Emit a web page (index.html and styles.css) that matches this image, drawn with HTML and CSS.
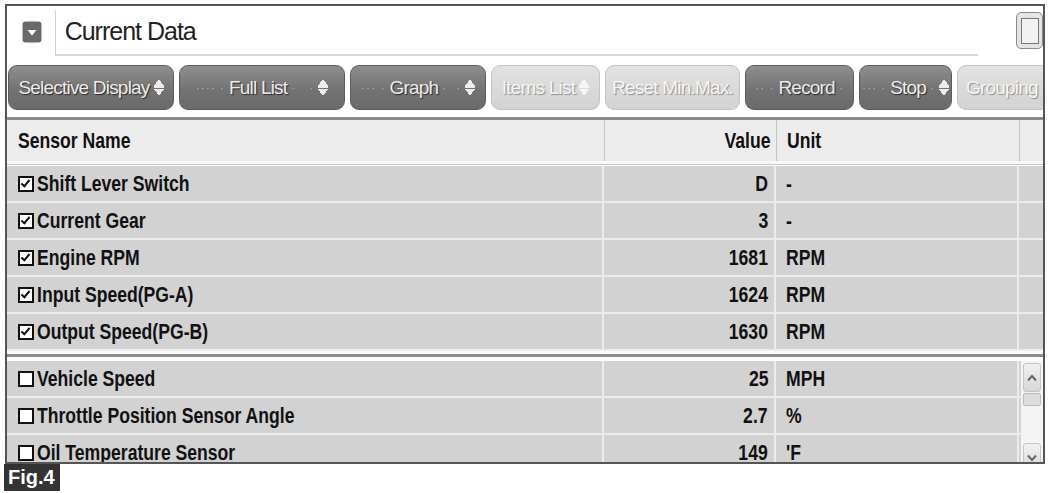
FILE: index.html
```html
<!DOCTYPE html>
<html lang="en">
<head>
<meta charset="UTF-8">
<title>Current Data</title>
<link rel="stylesheet" href="styles.css">
</head>
<body>
<div class="window">
    <div class="titlebar">
        <div class="menu-icon">
            <svg width="20" height="22" viewBox="0 0 20 22"><rect x="0.5" y="0.5" width="19" height="21" rx="3" fill="#6a6a6a"/><path d="M5.5 9 L14.5 9 L10 14.5 Z" fill="#fff"/></svg>
        </div>
        <div class="title">Current Data</div>
        <div class="win-btn"><span></span></div>
    </div>

    <div class="toolbar">
        <div class="tbtn w1">Selective Display <i class="spin"></i></div>
        <div class="tbtn w1"><span class="dots">···· ·</span> Full List <span class="dots">·&nbsp;&nbsp;&nbsp;·</span> <i class="spin"></i></div>
        <div class="tbtn w2"><span class="dots">··· ·</span> Graph <span class="dots">·&nbsp;&nbsp;·</span> <i class="spin"></i></div>
        <div class="tbtn w3 off">Items List <i class="spin"></i></div>
        <div class="tbtn w4 off">Reset Min.Max.</div>
        <div class="tbtn w3"><span class="dots">·· ·</span> Record <span class="dots">·</span></div>
        <div class="tbtn w5"><span class="dots">··· ·</span> Stop <span class="dots">·</span> <i class="spin"></i></div>
        <div class="tbtn w6 off">Grouping</div>
    </div>

    <div class="grid">
        <div class="row head">
            <div class="c-name"><span class="t">Sensor Name</span></div>
            <div class="c-val"><span class="t">Value</span></div>
            <div class="c-unit"><span class="t">Unit</span></div>
            <div class="c-end"></div>
        </div>

        <div class="fixed">
            <div class="row"><div class="c-name"><i class="cb on"></i><span class="t">Shift Lever Switch</span></div><div class="c-val"><span class="t">D</span></div><div class="c-unit"><span class="t">-</span></div><div class="c-end"></div></div>
            <div class="row"><div class="c-name"><i class="cb on"></i><span class="t">Current Gear</span></div><div class="c-val"><span class="t">3</span></div><div class="c-unit"><span class="t">-</span></div><div class="c-end"></div></div>
            <div class="row"><div class="c-name"><i class="cb on"></i><span class="t">Engine RPM</span></div><div class="c-val"><span class="t">1681</span></div><div class="c-unit"><span class="t">RPM</span></div><div class="c-end"></div></div>
            <div class="row"><div class="c-name"><i class="cb on"></i><span class="t">Input Speed(PG-A)</span></div><div class="c-val"><span class="t">1624</span></div><div class="c-unit"><span class="t">RPM</span></div><div class="c-end"></div></div>
            <div class="row"><div class="c-name"><i class="cb on"></i><span class="t">Output Speed(PG-B)</span></div><div class="c-val"><span class="t">1630</span></div><div class="c-unit"><span class="t">RPM</span></div><div class="c-end"></div></div>
        </div>

        <div class="scrolled">
            <div class="rows">
                <div class="row"><div class="c-name"><i class="cb"></i><span class="t">Vehicle Speed</span></div><div class="c-val"><span class="t">25</span></div><div class="c-unit"><span class="t">MPH</span></div></div>
                <div class="row"><div class="c-name"><i class="cb"></i><span class="t">Throttle Position Sensor Angle</span></div><div class="c-val"><span class="t">2.7</span></div><div class="c-unit"><span class="t">%</span></div></div>
                <div class="row"><div class="c-name"><i class="cb"></i><span class="t">Oil Temperature Sensor</span></div><div class="c-val"><span class="t">149</span></div><div class="c-unit"><span class="t">'F</span></div></div>
            </div>
            <div class="vscroll">
                <div class="sb-btn"><svg width="12" height="8" viewBox="0 0 12 8"><path d="M2 6.5 L6 2 L10 6.5" fill="none" stroke="#666" stroke-width="2"/></svg></div>
                <div class="sb-thumb"></div>
                <div class="sb-track"></div>
                <div class="sb-btn"><svg width="12" height="8" viewBox="0 0 12 8"><path d="M2 1.5 L6 6 L10 1.5" fill="none" stroke="#666" stroke-width="2"/></svg></div>
            </div>
        </div>
    </div>
</div>
<div class="fig">Fig.4</div>
</body>
</html>
```

FILE: styles.css
```css
body {
    margin: 0;
    background: #fff;
    font-family: "Liberation Sans", Arial, sans-serif;
    color: #111;
}
.window {
    margin: 4px 0 0 5px;
    width: 1036px;
    height: 456px;
    border: 2px solid #555;
    overflow: hidden;
    background: #fff;
}

/* title */
.titlebar {
    display: flex;
    height: 50px;
}
.menu-icon {
    width: 46px;
    display: flex;
    align-items: center;
    justify-content: center;
    border-right: 1px solid #ccc;
    margin-top: 4px;
    padding: 0 0 2px 2px;
}
.title {
    width: 921px;
    padding-left: 9px;
    font-size: 25px;
    letter-spacing: -1px;
    line-height: 50px;
    border-bottom: 2px solid #d8d8d8;
    color: #222;
}
.win-btn {
    margin: 6px 0 0 38px;
    width: 25px;
    height: 35px;
    border: 1px solid #888;
    border-radius: 5px;
    background: #e4e4e4;
    display: flex;
    align-items: center;
    justify-content: center;
}
.win-btn span {
    width: 16px;
    height: 24px;
    border: 1px solid #777;
    background: #f2f2f2;
}

/* toolbar */
.toolbar {
    display: flex;
    gap: 5px;
    padding: 9px 0 0 1px;
    box-sizing: border-box;
    height: 61px;
}
.tbtn {
    flex: none;
    height: 45px;
    box-sizing: border-box;
    border: 1px solid #5c5c5c;
    border-radius: 9px;
    background: linear-gradient(#8e8e8e, #737373 55%, #6a6a6a);
    color: #ececec;
    text-shadow: 1px 1px 1px #2a2a2a;
    font-size: 19px;
    letter-spacing: -0.8px;
    display: flex;
    align-items: center;
    justify-content: center;
    gap: 4px;
    white-space: nowrap;
    overflow: hidden;
}
.tbtn.off {
    background: linear-gradient(#e2e2e2, #d2d2d2);
    border-color: #c4c4c4;
    color: #f6f6f6;
    text-shadow: 1px 1px 1px #8a8a8a;
}
.w1 { width: 166px; }
.w2 { width: 136px; }
.w3 { width: 109px; }
.w4 { width: 135px; }
.w5 { width: 93px; }
.w6 { width: 100px; justify-content: flex-start; padding-left: 8px; }
.dots {
    color: #b0b0b0;
    font-size: 12px;
    letter-spacing: 1px;
    text-shadow: none;
}
.spin {
    width: 10px;
    height: 17px;
    flex: none;
    display: inline-block;
    background:
        linear-gradient(to bottom right, transparent 50%, currentColor 50%) 0 0 / 5px 7px no-repeat,
        linear-gradient(to bottom left, transparent 50%, currentColor 50%) 5px 0 / 5px 7px no-repeat,
        linear-gradient(currentColor, currentColor) 0 7px / 10px 2px no-repeat,
        linear-gradient(to top right, transparent 50%, currentColor 50%) 0 10px / 5px 7px no-repeat,
        linear-gradient(to top left, transparent 50%, currentColor 50%) 5px 10px / 5px 7px no-repeat;
}

/* grid */
.grid {
    border-top: 3px solid #8a8a8a;
    font-size: 22px;
    font-weight: bold;
}
.t {
    display: inline-block;
    white-space: nowrap;
    transform: scaleX(0.8);
    transform-origin: left center;
}
.c-val .t {
    transform-origin: right center;
}
.row {
    display: flex;
    height: 35px;
    align-items: center;
    background: #d2d2d2;
    border-bottom: 2px solid #ececec;
}
.row > div {
    height: 100%;
    display: flex;
    align-items: center;
    box-sizing: border-box;
}
.c-name {
    width: 597px;
    padding-left: 11px;
    border-right: 2px solid #ececec;
}
.c-val {
    width: 172px;
    justify-content: flex-end;
    padding-right: 6px;
    border-right: 2px solid #ececec;
}
.c-unit {
    width: 243px;
    padding-left: 10px;
    border-right: 2px solid #ececec;
}
.c-end {
    flex: 1;
}
.row.head {
    height: 41px;
    background: #ececec;
    border-bottom: 3px solid #f8f8f8;
    box-shadow: 0 1px 0 #c8c8c8;
}
.row.head > div {
    border-right-color: #c4c4c4;
    border-right-width: 1px;
}
.row.head .c-name { width: 598px; }
.fixed {
    margin-top: 2px;
    border-bottom: 3px solid #fafafa;
    box-shadow: 0 3px 0 #8c8c8c;
    margin-bottom: 7px;
}
.cb {
    width: 12px;
    height: 12px;
    border: 2px solid #111;
    background: #fff;
    margin-right: 3px;
    position: relative;
    flex: none;
}
.cb.on::after {
    content: "";
    position: absolute;
    left: 3px;
    top: 0px;
    width: 3px;
    height: 7px;
    border: solid #111;
    border-width: 0 2px 2px 0;
    transform: rotate(40deg);
}

/* bottom scroll area */
.scrolled {
    display: flex;
}
.rows {
    width: 1014px;
}
.vscroll {
    flex: 1;
    display: flex;
    flex-direction: column;
    background: #f4f4f4;
    padding: 2px 2px 0 2px;
}
.sb-btn {
    height: 27px;
    border: 1px solid #c4c4c4;
    border-radius: 3px;
    background: linear-gradient(#f2f2f2, #d6d6d6);
    display: flex;
    align-items: center;
    justify-content: center;
}
.sb-thumb {
    height: 11px;
    margin-top: 1px;
    border: 1px solid #bbb;
    border-radius: 2px;
    background: #dcdcdc;
}
.sb-track {
    flex: 1;
}

.fig {
    display: inline-block;
    margin-left: 4px;
    background: #333;
    color: #fff;
    font-weight: bold;
    font-size: 20px;
    padding: 2px 5px 2px 4px;
}
```
